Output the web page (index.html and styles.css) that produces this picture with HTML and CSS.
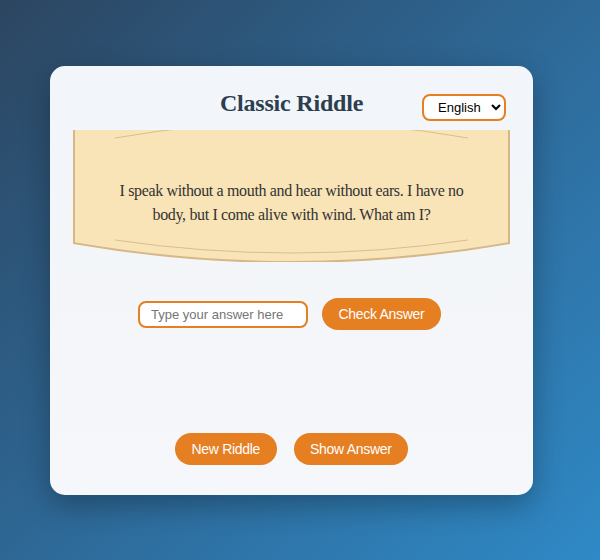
FILE: index.html
```html
<!DOCTYPE html>
<html lang="en">
<head>
<meta charset="utf-8">
<title>Classic Riddle</title>
<link rel="stylesheet" href="styles.css">
</head>
<body>
<div class="page">
  <div class="card">
    <select class="lang">
      <option>English</option>
      <option>Español</option>
      <option>Français</option>
    </select>
    <h1 class="title">Classic Riddle</h1>
    <div class="scroll">
      <svg class="scroll-bg" viewBox="0 0 437 132" preserveAspectRatio="none" aria-hidden="true">
        <path d="M0,0 H437 V113 Q218.5,151 0,113 Z" fill="#f9e4b7"/>
        <path d="M1,0 V113.5" stroke="#d6b888" stroke-width="2" fill="none"/>
        <path d="M436,0 V113.5" stroke="#d6b888" stroke-width="2" fill="none"/>
        <path d="M0,113 Q218.5,151 437,113" stroke="#d6b888" stroke-width="2" fill="none"/>
        <path d="M42,8 Q218.5,-23.4 395,8" stroke="#d9bd8f" stroke-width="1" fill="none"/>
        <path d="M42,110 Q218.5,136 395,110" stroke="#d9bd8f" stroke-width="1" fill="none"/>
      </svg>
      <p class="riddle">I speak without a mouth and hear without ears. I have no body, but I come alive with wind. What am I?</p>
    </div>
    <div class="answer-row">
      <input class="answer" type="text" placeholder="Type your answer here">
      <button class="btn">Check Answer</button>
    </div>
    <div class="actions">
      <button class="btn">New Riddle</button>
      <button class="btn">Show Answer</button>
    </div>
  </div>
</div>
</body>
</html>
```
FILE: styles.css
```css
html, body {
  margin: 0;
  padding: 0;
}
body {
  width: 600px;
  min-height: 560px;
  background: linear-gradient(135deg, #2c4560 0%, #2e6c9c 55%, #2f89c6 100%);
  font-family: "Liberation Sans", Arial, sans-serif;
}
.page {
  width: 583px;
  padding-top: 66px;
  display: flex;
  justify-content: center;
}
.card {
  position: relative;
  box-sizing: border-box;
  width: 483px;
  height: 429px;
  padding: 24px 23px 30px;
  background: linear-gradient(180deg, #f2f5f9, #f5f7fa);
  border-radius: 15px;
  box-shadow: 0 10px 30px rgba(0, 0, 0, 0.3);
  display: flex;
  flex-direction: column;
}
.lang {
  position: absolute;
  top: 28px;
  right: 27px;
  width: 84px;
  height: 27px;
  box-sizing: border-box;
  border: 2px solid #e67e22;
  border-radius: 8px;
  background: #fff;
  padding: 0 6px 0 10px;
  font-family: "Liberation Sans", Arial, sans-serif;
  font-size: 13px;
  color: #000;
}
.title {
  margin: 0;
  font-family: "Liberation Serif", "Times New Roman", serif;
  font-weight: bold;
  font-size: 24px;
  line-height: 26px;
  letter-spacing: -0.2px;
  color: #2c3e50;
  text-align: center;
}
.scroll {
  position: relative;
  margin-top: 14px;
  height: 132px;
  box-sizing: border-box;
  padding: 49px 40px 35px;
}
.scroll-bg {
  position: absolute;
  inset: 0;
  width: 100%;
  height: 100%;
  overflow: hidden;
}
.riddle {
  position: relative;
  margin: 0;
  font-family: "Liberation Serif", "Times New Roman", serif;
  font-size: 16px;
  line-height: 24px;
  letter-spacing: -0.35px;
  color: #333;
  text-align: center;
}
.answer-row {
  margin-top: 36px;
  display: flex;
  justify-content: center;
  align-items: center;
  gap: 14px;
  padding-right: 4px;
}
.answer {
  box-sizing: border-box;
  width: 170px;
  height: 27px;
  border: 2px solid #e67e22;
  border-radius: 8px;
  padding: 0 11px;
  font-family: "Liberation Sans", Arial, sans-serif;
  font-size: 13px;
  background: #fff;
  outline: none;
}
.answer::placeholder {
  color: #757575;
}
.btn {
  height: 32px;
  padding: 0 16.5px;
  border: none;
  border-radius: 16px;
  background: #e67e22;
  color: #fff;
  font-family: "Liberation Sans", Arial, sans-serif;
  font-size: 14px;
  letter-spacing: -0.3px;
  cursor: pointer;
}
.actions {
  margin-top: 103px;
  display: flex;
  justify-content: center;
  gap: 17px;
}
```
